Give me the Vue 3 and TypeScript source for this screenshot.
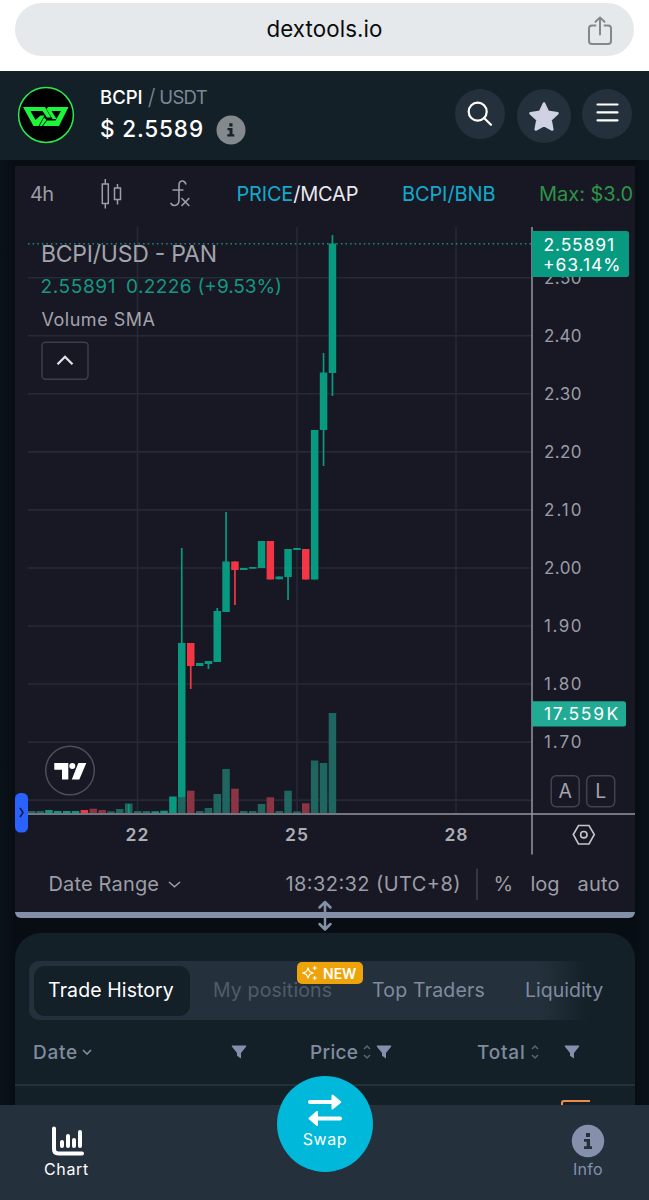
<script setup lang="ts">
type Tone = 'up' | 'down'
interface Candle { x: number; tone: Tone; top: number; bottom: number; high?: number; low?: number }
interface Volume { x: number; tone: Tone; top: number; solid?: boolean }

const candles: Candle[] = [
  { x: 178, tone: 'up', top: 643, bottom: 797, high: 548 },
  { x: 187, tone: 'down', top: 643, bottom: 666, low: 689 },
  { x: 196, tone: 'up', top: 663, bottom: 666 },
  { x: 204.7, tone: 'up', top: 661, bottom: 664, low: 669 },
  { x: 213.5, tone: 'up', top: 611, bottom: 662, high: 608 },
  { x: 222.3, tone: 'up', top: 561.5, bottom: 612, high: 512 },
  { x: 231.2, tone: 'down', top: 561.5, bottom: 570, low: 605 },
  { x: 240, tone: 'up', top: 568, bottom: 570 },
  { x: 249, tone: 'up', top: 567, bottom: 568.7 },
  { x: 257.8, tone: 'up', top: 541, bottom: 568 },
  { x: 266.6, tone: 'down', top: 541, bottom: 579.5 },
  { x: 275.5, tone: 'up', top: 576.5, bottom: 579.3 },
  { x: 284.3, tone: 'up', top: 549, bottom: 577, low: 600 },
  { x: 293.2, tone: 'up', top: 548, bottom: 550 },
  { x: 302, tone: 'down', top: 549, bottom: 579.5 },
  { x: 310.9, tone: 'up', top: 430, bottom: 579.5 },
  { x: 319.8, tone: 'up', top: 372.5, bottom: 430, high: 353, low: 466 },
  { x: 328.7, tone: 'up', top: 243.5, bottom: 373, high: 235, low: 396 },
]

const volumes: Volume[] = [
  { x: 28, tone: 'up', top: 811 },
  { x: 36.5, tone: 'up', top: 811 },
  { x: 45.2, tone: 'up', top: 810, solid: true },
  { x: 54, tone: 'up', top: 811, solid: true },
  { x: 63, tone: 'up', top: 811, solid: true },
  { x: 71.8, tone: 'up', top: 811, solid: true },
  { x: 80.6, tone: 'down', top: 810, solid: true },
  { x: 89.5, tone: 'down', top: 808.7 },
  { x: 98.4, tone: 'down', top: 810 },
  { x: 107.2, tone: 'up', top: 811.3 },
  { x: 116, tone: 'up', top: 809 },
  { x: 125, tone: 'up', top: 803.5 },
  { x: 134, tone: 'up', top: 811 },
  { x: 142.7, tone: 'up', top: 811 },
  { x: 151.5, tone: 'up', top: 811.3, solid: true },
  { x: 160.3, tone: 'up', top: 810.7, solid: true },
  { x: 169.2, tone: 'up', top: 796.5, solid: true },
  { x: 178, tone: 'up', top: 797 },
  { x: 187, tone: 'down', top: 790.7 },
  { x: 196, tone: 'up', top: 811 },
  { x: 204.7, tone: 'up', top: 808 },
  { x: 213.5, tone: 'up', top: 794 },
  { x: 222.3, tone: 'up', top: 769 },
  { x: 231.2, tone: 'down', top: 788.7 },
  { x: 240, tone: 'up', top: 811 },
  { x: 249, tone: 'up', top: 811 },
  { x: 257.8, tone: 'up', top: 804 },
  { x: 266.6, tone: 'down', top: 797.3 },
  { x: 275.5, tone: 'up', top: 811 },
  { x: 284.3, tone: 'up', top: 790.7 },
  { x: 293.2, tone: 'up', top: 811.3 },
  { x: 302, tone: 'down', top: 803.3 },
  { x: 310.9, tone: 'up', top: 760.5 },
  { x: 319.8, tone: 'up', top: 763 },
  { x: 328.7, tone: 'up', top: 713 },
]

const gridY = Array.from({ length: 10 }, (_, i) => 277.7 + i * 58.05)
const gridX = [137.5, 297, 456]
const prices = ['2.50', '2.40', '2.30', '2.20', '2.10', '2.00', '1.90', '1.80', '1.70']
const days = [{ x: 137.5, label: '22' }, { x: 297, label: '25' }, { x: 456.5, label: '28' }]
</script>

<template>
  <div class="screen">
    <div class="browser">
      <div class="address">
        <span class="url">dextools.io</span>
        <svg class="share" width="26" height="30" viewBox="0 0 26 30">
          <path d="M8.5 9.5H5A3 3 0 0 0 2 12.500V25A3 3 0 0 0 5 28H21A3 3 0 0 0 24 25V12.500A3 3 0 0 0 21 9.500H17.500M13 18.500V1.800M8.500 5.800L13 1.500L17.500 5.800" />
        </svg>
      </div>
    </div>

    <header class="header">
      <svg class="coin" width="58" height="58" viewBox="0 0 58 58">
        <circle cx="29" cy="29" r="27.400" fill="#000" stroke="#2bea4b" stroke-width="1.500" />
        <path fill="#1df43c" d="M6 21H28L34 31.500H30L25.500 25H13.500L18.500 34L23.500 29.500H27.500L21.500 40H16.500ZM31 21H51.500L42 40H26L30 34.500H38.500L44 25H34.500L39.500 33H35.500L29.500 23ZM27 31.500L29.500 34L25 40H22.500Z" />
      </svg>
      <div class="pair">
        <div class="names"><b>BCPI</b><i>/</i><span>USDT</span></div>
        <div class="quote">
          <span>$ 2.5589</span>
          <svg width="30" height="30" viewBox="0 0 30 30">
            <circle cx="15" cy="15" r="14.500" fill="#84898e" />
            <path fill="#17222a" d="M13.300 8.300h3.200v3.200h-3.200zM11.500 13h5v6.200h1.800v2.300h-7v-2.300h2.200v-3.900h-2z" />
          </svg>
        </div>
      </div>
      <div class="actions">
        <span class="round">
          <svg width="50" height="50" viewBox="0 0 50 50"><g fill="none" stroke="#fff" stroke-width="2.200" stroke-linecap="round"><circle cx="22.700" cy="22.700" r="9" /><path d="M29.300 29.300L36 35.700" /></g></svg>
        </span>
        <span class="round big">
          <svg width="54" height="54" viewBox="0 0 54 54"><path d="M27 14.500L30.900 22.900L40.500 24.200L33.500 30.800L35.300 40.500L27 36L18.700 40.500L20.500 30.800L13.500 24.200L23.100 22.900Z" fill="#cfd1e4" stroke="#cfd1e4" stroke-width="2.600" stroke-linejoin="round" /></svg>
        </span>
        <span class="round">
          <svg width="50" height="50" viewBox="0 0 50 50"><path d="M15.500 15.500H35.500M15.500 23.400H35.500M15.500 31.300H35.500" stroke="#fff" stroke-width="2.200" stroke-linecap="round" /></svg>
        </span>
      </div>
    </header>

    <main class="chart">
      <svg width="620" height="746" viewBox="15 166 620 746" class="plot">
        <g class="tools">
          <text x="30" y="201" textLength="24" class="dim">4h</text>
          <g fill="none" stroke="#9c9da5" stroke-width="1.500">
            <path d="M102.300 184H108.300V203.500H102.300ZM105.300 179V184M105.300 203.500V208.500M114.500 188H120.500V199.500H114.500ZM117.500 184V188M117.500 199.500V204.500" />
            <path stroke-width="1.600" d="M186 184.500C184.500 179.500 179 180 179 185.500V200C179 206 173 207 170.500 203M172.500 190H183.500M181.500 198L189.300 206M189.300 198L181.500 206" />
          </g>
          <text x="236.500" y="201" textLength="122" class="light"><tspan class="cyan">PRICE</tspan>/MCAP</text>
          <text x="402" y="201" textLength="93.500" class="cyan">BCPI/BNB</text>
          <text x="539" y="201" textLength="94" class="max">Max: $3.0</text>
        </g>

        <g class="grid">
          <line v-for="y in gridY" :key="y" x1="28" x2="532" :y1="y" :y2="y" />
          <line v-for="x in gridX" :key="x" y1="227" y2="813" :x1="x" :x2="x" />
        </g>
        <line x1="28" x2="532" y1="243.700" y2="243.700" class="last" />

        <g v-for="c in candles" :key="c.x" :class="c.tone">
          <rect :x="c.x + 2.900" :y="c.high ?? c.top" width="1.700" :height="(c.low ?? c.bottom) - (c.high ?? c.top)" />
          <rect :x="c.x" :y="c.top" width="7.500" :height="c.bottom - c.top" />
        </g>
        <rect
          v-for="v in volumes" :key="v.x" :x="v.x" :y="v.top" width="7.500" :height="813 - v.top"
          :class="[v.tone, { faded: !v.solid }]"
        />
        <rect x="128" y="804" width="1.500" height="9" class="up" />

        <g class="axis">
          <line x1="532" x2="532" y1="227" y2="854.500" />
          <line x1="28" x2="635" y1="813.900" y2="813.900" />
        </g>

        <g class="legend">
          <text x="41" y="261.500" textLength="176" class="title">BCPI/USD - PAN</text>
          <text x="40.500" y="293" textLength="75">2.55891</text>
          <text x="126" y="293" textLength="65.500">0.2226</text>
          <text x="197.500" y="293" textLength="84.500">(+9.53%)</text>
          <text x="41.500" y="326" textLength="113.500" class="sma">Volume SMA</text>
          <rect x="42" y="342.300" width="46" height="37" rx="3.500" />
          <path d="M57.500 364.300L65 356.800L72.500 364.300" />
        </g>

        <g class="prices">
          <text v-for="(p, i) in prices" :key="p" x="544" :y="283.800 + i * 58.050" textLength="37.500">{{ p }}</text>
        </g>
        <path d="M532 231H626.500a2.500 2.500 0 0 1 2.500 2.500V274.500a2.500 2.500 0 0 1 -2.500 2.500H532Z" fill="#089981" />
        <path d="M532 701.300H623.500a2.500 2.500 0 0 1 2.500 2.500V724a2.500 2.500 0 0 1 -2.500 2.500H532Z" fill="#22ab94" />
        <g class="tags">
          <text x="543.500" y="250.500" textLength="70.500">2.55891</text>
          <text x="543" y="271" textLength="77.500">+63.14%</text>
          <text x="544" y="720.300" textLength="60">17.559</text>
          <text x="606.500" y="720.300">K</text>
        </g>

        <g class="scale">
          <rect x="551.200" y="775.700" width="28" height="31" rx="5" />
          <rect x="586.700" y="775.700" width="28" height="31" rx="5" />
          <text x="565.200" y="798.300">A</text>
          <text x="600.700" y="798.300">L</text>
          <path d="M573.300 834.500L578.500 825.500H589L594.300 834.500L589 844H578.500Z" />
          <circle cx="583.800" cy="834.700" r="3.200" />
        </g>

        <g class="days">
          <text v-for="d in days" :key="d.label" :x="d.x" y="841">{{ d.label }}</text>
        </g>

        <circle cx="70" cy="770.500" r="24.300" fill="#171823" stroke="#4b4d57" stroke-width="1.500" />
        <path d="M54.300 763H68.300V779.500H62V769.700H54.300ZM78.300 763H86.300L79.300 779.500H71.800Z" fill="#fff" />
        <circle cx="72.300" cy="766" r="3" fill="#fff" />
        <rect x="15" y="793" width="13" height="39.500" rx="5.500" fill="#2962ff" />
        <path d="M20 808L23 812.500L20 817" fill="none" stroke="#111b38" stroke-width="1.500" />

        <g class="foot">
          <text x="48.500" y="891" textLength="110.500">Date Range</text>
          <path d="M169 882L174.500 886.700L180 882" fill="none" stroke="#9c9da5" stroke-width="1.500" />
          <text x="285.500" y="891" textLength="175">18:32:32 (UTC+8)</text>
          <path d="M477 868.500V900" stroke="#3f414c" stroke-width="1.500" />
          <text x="493.500" y="891">%</text>
          <text x="530.500" y="891" textLength="29">log</text>
          <text x="577.500" y="891" textLength="42">auto</text>
        </g>
      </svg>
      <svg class="resize" width="16" height="32" viewBox="0 0 16 32">
        <path d="M8 2V29M2.500 7.500L8 2L13.500 7.500M2.500 24L8 29.500L13.500 24" />
      </svg>
    </main>

    <section class="trades">
      <div class="tabs">
        <span class="tab active"><em>Trade History</em></span>
        <span class="tab muted"><em>My positions</em></span>
        <span class="tab"><em>Top Traders</em></span>
        <span class="tab"><em>Liquidity</em></span>
        <span class="new">
          <svg width="16" height="16" viewBox="0 0 16 16"><path d="M6 3L7.600 6.600L11 8L7.600 9.500L6 13L4.400 9.500L1 8L4.400 6.600ZM12.700 1V5M10.700 3H14.700M12.700 11V15M10.700 13H14.700" fill="none" stroke="#fff" stroke-width="1.100" /></svg>
          NEW
        </span>
      </div>
      <div class="columns">
        <span class="col date">
          <em>Date</em>
          <svg width="10" height="8" viewBox="0 0 10 8"><path d="M1 2L5 6L9 2" class="line" /></svg>
          <svg class="funnel" width="16" height="14" viewBox="0 0 16 14"><path d="M1 .500H15Q15.600 1 15 1.800L10 8V13.500L6 10.700V8L1 1.800Q.400 1 1 .500Z" /></svg>
        </span>
        <span class="col price">
          <em>Price</em>
          <svg width="8" height="16" viewBox="0 0 8 16"><path d="M1 5L4 2L7 5M1 11L4 14L7 11" class="line thin" /></svg>
          <svg class="funnel" width="16" height="14" viewBox="0 0 16 14"><path d="M1 .500H15Q15.600 1 15 1.800L10 8V13.500L6 10.700V8L1 1.800Q.400 1 1 .500Z" /></svg>
        </span>
        <span class="col total">
          <em>Total</em>
          <svg width="8" height="16" viewBox="0 0 8 16"><path d="M1 5L4 2L7 5M1 11L4 14L7 11" class="line thin" /></svg>
          <svg class="funnel" width="16" height="14" viewBox="0 0 16 14"><path d="M1 .500H15Q15.600 1 15 1.800L10 8V13.500L6 10.700V8L1 1.800Q.400 1 1 .500Z" /></svg>
        </span>
      </div>
      <div class="row"><span class="chip"></span></div>
    </section>

    <nav class="nav">
      <span class="item">
        <svg width="34" height="31" viewBox="0 0 34 31"><path d="M3 2.500V23Q3 27.500 7.500 27.500H31" stroke-width="4" /><path d="M11 16V20M17 10V20M23 14V20M29 6V20" stroke-width="4" /></svg>
        <em>Chart</em>
      </span>
      <span class="swap">
        <svg width="36" height="34" viewBox="0 0 36 34">
          <path d="M3 9H27M8 25.500H33" fill="none" stroke="#fff" stroke-width="4" stroke-linecap="round" />
          <path d="M25.500 2.500L33.300 9L25.500 15.500ZM10 19L2.500 25.500L10 32Z" fill="#fff" stroke="#fff" stroke-width="2" stroke-linejoin="round" />
        </svg>
        <em>Swap</em>
      </span>
      <span class="item info">
        <svg width="34" height="34" viewBox="0 0 34 34"><circle cx="17" cy="17" r="16.200" fill="#8490ac" stroke="none" /><path fill="#24313c" stroke="none" d="M15 9h4v4h-4zM13 15h6v7.300h2v2.700h-8v-2.700h2.700v-4.600h-2.700z" /></svg>
        <em>Info</em>
      </span>
    </nav>
  </div>
</template>

<style>
body { margin: 0; background: #080f15; }
</style>

<style scoped>
.screen {
  width: 649px; height: 1200px; overflow: hidden; display: flex; flex-direction: column;
  background: linear-gradient(90deg, #0a1219, #070d13 15px, #070d13 634px, #0a1219);
  font-family: Inter, "Liberation Sans", sans-serif;
}
em, i { font-style: normal; }
svg { display: block; flex: none; }
.browser { height: 68px; padding: 3px 15px 0; background: #fff; flex: none; }
.address { height: 53px; border-radius: 27px; background: #e6e9ec; display: grid; grid-template-columns: 1fr auto 1fr; align-items: center; }
.url { grid-column: 2; margin-top: -3px; font-size: 22.300px; color: #0b0c0d; letter-spacing: .1px; }
.share { justify-self: end; margin: 3px 21px 0 0; fill: none; stroke: #84878b; stroke-width: 2; stroke-linecap: round; stroke-linejoin: round; }

.header { height: 89px; flex: none; box-sizing: border-box; background: #142028; display: flex; align-items: flex-start; padding: 15px 17px 0 17px; }
.pair { margin-left: 25px; }
.names { display: flex; align-items: center; height: 22px; font-size: 18.500px; color: #7f8797; }
.names b { font-weight: 500; color: #fff; }
.names i { margin: 0 4px 0 5px; font-size: 22px; font-weight: 300; }
.names span { letter-spacing: -.7px; }
.quote { display: flex; align-items: center; height: 40px; gap: 12px; color: #fff; font-size: 22.500px; font-weight: 500; letter-spacing: .85px; }
.quote svg { margin-top: 4px; }
.actions { margin-left: auto; display: flex; gap: 12px; padding-top: 3px; }
.actions .round:last-child { margin-left: -1px; }
.round { width: 50px; height: 50px; border-radius: 50%; background: #24313c; }
.round.big { width: 54px; height: 54px; }

.chart { position: relative; width: 620px; height: 746px; flex: none; margin: 6px 0 0 15px; background: #171824; border-bottom: 6px solid #8490a8; border-radius: 0 0 6px 6px; }
.resize { position: absolute; left: 301.500px; top: 734px; fill: none; stroke: #8490a8; stroke-width: 2.500; stroke-linecap: round; stroke-linejoin: round; }
.plot text { font-size: 20px; }
.dim { fill: #9c9da5; }
.light { fill: #e9e9ee; }
.cyan { fill: #13a9ca; }
.max { fill: #2d9448; }
.grid { stroke: #272935; stroke-width: 1.600; }
.last { stroke: #17877a; stroke-width: 1.600; stroke-dasharray: 1.600 3; }
.up { fill: #089981; }
.down { fill: #f23645; }
.up.faded { fill: #1e665f; }
.down.faded { fill: #8b3444; }
.axis { stroke: #9496a0; stroke-width: 1.500; }
.legend text { fill: #169782; font-size: 19px; }
.legend .title { fill: #a3a4ab; font-size: 23px; }
.legend .sma { fill: #a3a4ab; font-size: 18px; }
.legend rect { fill: #171824; stroke: #3b3d48; stroke-width: 1.500; }
.legend path { fill: none; stroke: #e2e2e6; stroke-width: 2.300; }
.plot .prices text { fill: #9b9ca5; font-size: 17px; }
.plot .tags text { fill: #fff; font-size: 17.500px; }
.scale rect { fill: none; stroke: #41434e; stroke-width: 1.500; }
.scale path, .scale circle { fill: none; stroke: #c4c5cb; stroke-width: 1.600; }
.plot .scale text { fill: #a3a4ab; font-size: 19.500px; text-anchor: middle; }
.plot .days text { fill: #adaeb5; font-size: 17.500px; font-weight: 600; text-anchor: middle; letter-spacing: 1px; }
.foot text { fill: #9c9da5; }

.trades { width: 620px; height: 172px; flex: none; margin: 15px 0 0 15px; background: #142028; border-radius: 26px 26px 0 0; overflow: hidden; }
.tabs { position: relative; height: 59px; margin: 28px 24px 0 14px; border-radius: 10px; background: linear-gradient(90deg, #24313c 510px, #142028 560px); display: flex; align-items: center; box-sizing: border-box; padding-left: 5px; color: #808b9e; font-size: 19.500px; white-space: nowrap; }
.tab em { position: relative; top: -1px; }
.tab.active { width: 156px; height: 50px; border-radius: 11px; background: #142028; color: #fff; display: flex; align-items: center; justify-content: center; letter-spacing: .1px; }
.tab.active em { left: -1px; }
.tab.muted { margin-left: 23px; width: 118px; color: #505c6a; letter-spacing: .15px; }
.tab.muted + .tab { margin-left: 41px; width: 113px; letter-spacing: .2px; }
.tab:nth-child(4) { margin-left: 40px; }
.new { position: absolute; left: 268px; top: 1px; height: 22px; width: 66px; box-sizing: border-box; padding-left: 5px; border-radius: 5px; background: #eea30a; color: #fff; font-size: 14px; font-weight: 600; display: flex; align-items: center; gap: 5px; }
.columns { height: 64px; display: flex; align-items: center; border-bottom: 2px solid #24313c; color: #808b9e; font-size: 19px; font-weight: 450; }
.col { display: flex; align-items: center; box-sizing: border-box; }
.date { width: 295px; padding-left: 18px; }
.date em { width: 45px; letter-spacing: .7px; }
.date .funnel { margin-left: 139px; }
.date svg:not(.funnel) { margin-left: 4px; }
.price { width: 167px; }
.price em { width: 48px; letter-spacing: .3px; }
.total em { width: 49px; letter-spacing: .8px; }
.price svg:not(.funnel), .total svg:not(.funnel) { margin-left: 5px; }
.price .funnel { margin-left: 5px; }
.total .funnel { margin-left: 25px; }
.funnel { fill: #8490ac; }
.line { fill: none; stroke: #808b9e; stroke-width: 1.600; }
.thin { stroke: #596575; stroke-width: 1.500; }
.row { height: 19px; box-sizing: border-box; padding: 14px 0 0 546px; }
.chip { display: block; width: 27px; height: 12px; border: 2px solid #ed8d4c; border-right: 0; border-radius: 3px 0 0 0; }

.nav { position: relative; height: 95px; flex: none; background: #24313c; display: flex; justify-content: space-between; padding: 0 44px 0 44px; color: #fff; font-size: 16px; }
.item { display: flex; flex-direction: column; align-items: center; padding-top: 19px; fill: none; }
.item svg { stroke: #fff; stroke-linecap: round; }
.item:first-child svg { margin: 2px 0 0 3px; }
.item em { margin-top: 2px; line-height: 20px; letter-spacing: .65px; }
.item.info { color: #8490ac; }
.item.info em { margin-top: 1px; letter-spacing: .3px; }
.swap { position: absolute; left: 277px; top: -29px; width: 96px; height: 96px; border-radius: 50%; background: #00b8d9; display: flex; flex-direction: column; align-items: center; }
.swap svg { margin: 17px 0 0 -1px; }
.swap em { line-height: 20px; margin-top: 2px; letter-spacing: .6px; }
</style>
